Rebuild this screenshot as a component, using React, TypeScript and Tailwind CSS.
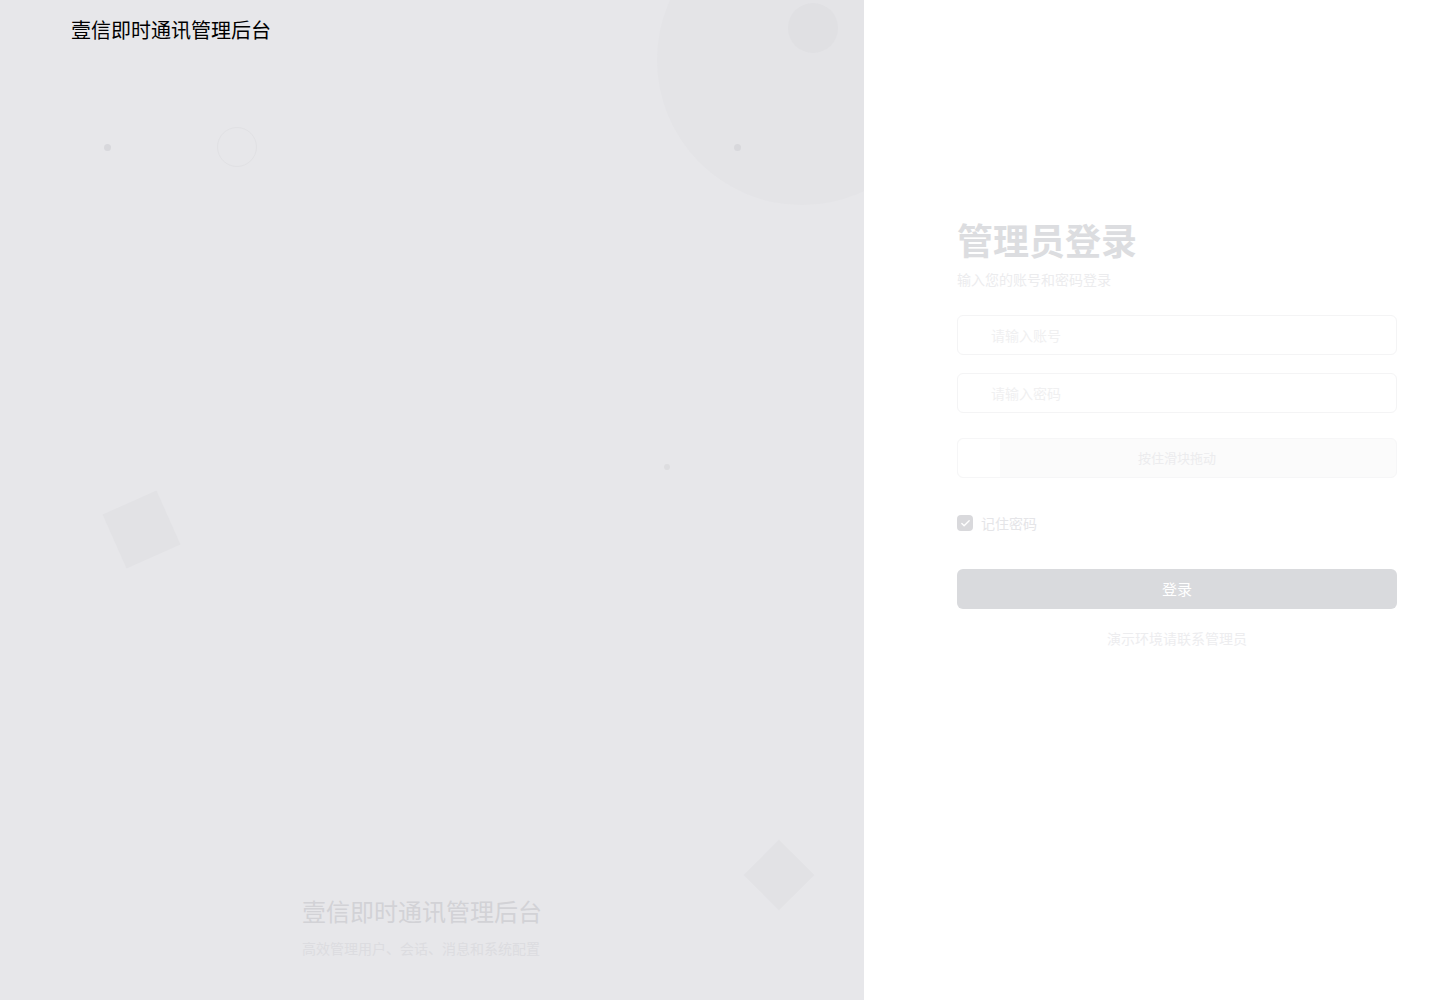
import { Check } from 'lucide-react';

const font = { fontFamily: '"Noto Sans CJK SC", "Noto Sans", sans-serif' };

function Decorations() {
  return (
    <>
      <div className="absolute left-[657px] top-[-85px] h-[290px] w-[290px] rounded-full bg-[#e4e4e7]" />
      <div className="absolute left-[788px] top-[3px] h-[50px] w-[50px] rounded-full bg-[#e0e0e3]" />
      <div className="absolute left-[104px] top-[144px] h-[7px] w-[7px] rounded-full bg-[#d8d8dc]" />
      <div className="absolute left-[734px] top-[144px] h-[7px] w-[7px] rounded-full bg-[#d8d8dc]" />
      <div className="absolute left-[664px] top-[464px] h-[6px] w-[6px] rounded-full bg-[#dddde0]" />
      <div className="absolute left-[217px] top-[127px] h-[40px] w-[40px] rounded-full border border-[#e1e1e4]" />
      <div className="absolute left-[112px] top-[500px] h-[59px] w-[59px] -rotate-[24deg] bg-[#e2e2e5]" />
      <div className="absolute left-[754px] top-[850px] h-[50px] w-[50px] rotate-45 bg-[#e2e2e5]" />
    </>
  );
}

export default function App() {
  return (
    <div className="flex h-[1000px] w-[1440px] overflow-hidden" style={font}>
      <div className="relative flex w-[864px] flex-col overflow-hidden bg-[#e7e7ea]">
        <Decorations />
        <div className="relative pl-[71px] pt-[17px] text-[20px] leading-[26px] text-black">
          壹信即时通讯管理后台
        </div>
        <div className="relative mt-auto mb-[42px] pl-[302px]">
          <div className="text-[24px] leading-[32px] text-[#d2d2d6]">壹信即时通讯管理后台</div>
          <div className="mt-[11px] text-[14px] leading-[20px] text-[#dcdce0]">
            高效管理用户、会话、消息和系统配置
          </div>
        </div>
      </div>
      <div className="flex flex-1 flex-col bg-white pl-[93px] pt-[215px]">
        <div className="w-[440px]">
          <h1 className="text-[36px] font-bold leading-[48px] text-[#dcdde0]">管理员登录</h1>
          <p className="mt-[6px] text-[14px] leading-[20px] text-[#ececee]">输入您的账号和密码登录</p>
          <div className="mt-[26px] flex h-[40px] items-center rounded-[6px] border border-[#f4f4f5] pl-[33px] text-[14px] text-[#f0f0f1]">
            请输入账号
          </div>
          <div className="mt-[18px] flex h-[40px] items-center rounded-[6px] border border-[#f4f4f5] pl-[33px] text-[14px] text-[#f0f0f1]">
            请输入密码
          </div>
          <div className="relative mt-[25px] flex h-[40px] items-center justify-center rounded-[6px] border border-[#f6f6f7] bg-[#fbfbfb] text-[13px] text-[#ececee]">
            <div className="absolute left-0 top-0 h-full w-[42px] rounded-l-[6px] bg-white" />
            <span className="relative">按住滑块拖动</span>
          </div>
          <label className="mt-[35px] flex items-center gap-[8px]">
            <span className="flex h-[16px] w-[16px] items-center justify-center rounded-[4px] bg-[#d9d9dc]">
              <Check size={11} strokeWidth={3} className="text-white" />
            </span>
            <span className="text-[14px] leading-[20px] text-[#e5e5e8]">记住密码</span>
          </label>
          <button className="mt-[36px] h-[40px] w-full rounded-[6px] bg-[#d9dadd] text-[15px] text-white">
            登录
          </button>
          <div className="mt-[19px] text-center text-[14px] leading-[20px] text-[#ededef]">
            演示环境请联系管理员
          </div>
        </div>
      </div>
    </div>
  );
}
